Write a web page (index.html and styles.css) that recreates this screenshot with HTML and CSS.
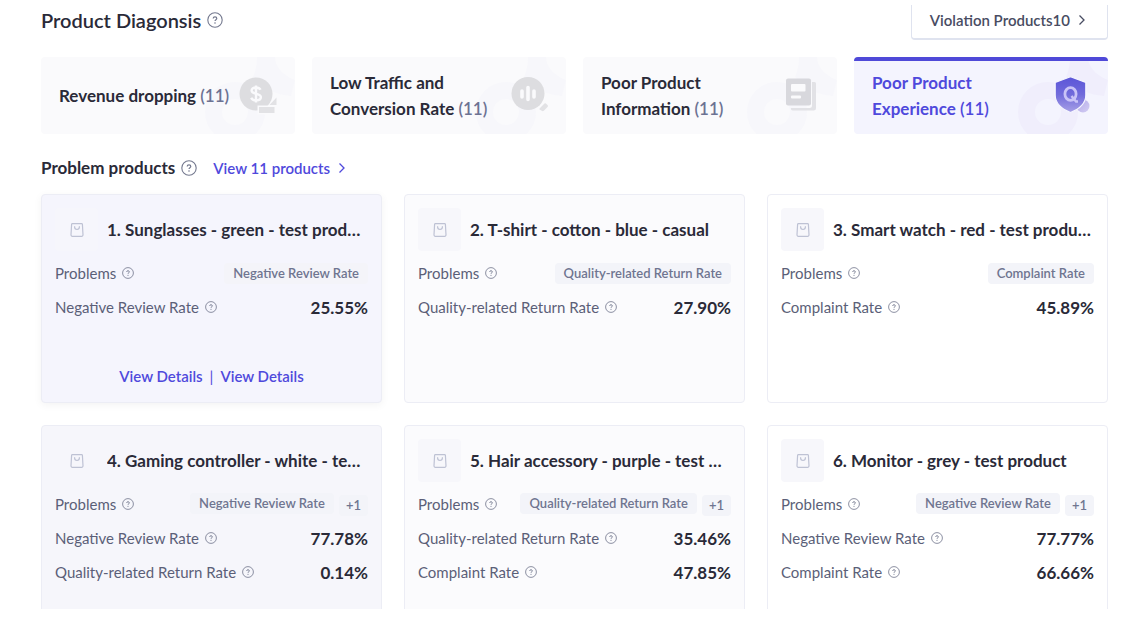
FILE: index.html
```html
<!DOCTYPE html>
<html lang="en">
<head>
<meta charset="utf-8">
<title>Product Diagonsis</title>
<link rel="stylesheet" href="styles.css">
</head>
<body>
<svg class="sprite" aria-hidden="true">
  <symbol id="help" viewBox="0 0 16 16">
    <circle cx="8" cy="8" r="7.2" fill="none" stroke="currentColor" stroke-width="1.1"/>
    <path d="M6.2 6.6c0-1 .8-1.7 1.8-1.7s1.8.7 1.8 1.6c0 1.2-1.8 1.3-1.8 2.6" fill="none" stroke="currentColor" stroke-width="1.2"/>
    <circle cx="8" cy="11" r=".8" fill="currentColor"/>
  </symbol>
  <symbol id="chevron" viewBox="0 0 8 12">
    <path d="M1.500 1.500 6 6l-4.500 4.500" fill="none" stroke="currentColor" stroke-width="1.300"/>
  </symbol>
  <symbol id="bag" viewBox="0 0 14 14">
    <path d="M2.400.7h9.200q.7 0 .8.700l.6 10.400a1.400 1.400 0 0 1-1.400 1.500H2.400A1.400 1.400 0 0 1 1 11.800L1.600 1.400q.1-.7.800-.7z" fill="none" stroke="currentColor" stroke-width="1.200"/>
    <path d="M4.600 3.200v.9a2.400 2.400 0 0 0 4.800 0v-.9" fill="none" stroke="currentColor" stroke-width="1.200"/>
  </symbol>
  <symbol id="rings" viewBox="0 0 92 77">
    <circle cx="32" cy="55" r="21.500" fill="none" stroke="currentColor" stroke-width="17"/>
    <path d="M54 0h18c0 9 7 18 20 23l-4 16C72 38 60 31 50 20c3-7 4-13 4-20z" fill="currentColor"/>
  </symbol>
</svg>
<main class="page">
  <header class="top">
    <h1 class="heading">Product Diagonsis <svg class="help help-lg"><use href="#help"/></svg></h1>
    <button class="violation" type="button">Violation Products10 <svg class="chevron"><use href="#chevron"/></svg></button>
  </header>

  <nav class="tabs">
    <button class="tab" type="button">
      <svg class="rings"><use href="#rings"/></svg>
      <span class="tab-label">Revenue dropping <span class="count">(11)</span></span>
      <svg class="tab-icon" viewBox="0 0 38 38">
        <circle cx="17" cy="17" r="16.500" fill="#dddde0"/>
        <path d="M21.500 12.800c-.8-1.600-2.500-2.300-4.500-2.300-2.600 0-4.400 1.200-4.400 3.100 0 4.400 9.300 2.200 9.300 6.500 0 2-2 3.300-4.700 3.300-2.300 0-4.200-.9-5-2.700M17 8.500v17" fill="none" stroke="#fafafc" stroke-width="2.400"/>
        <path d="M18.500 28.500h19v9h-19z" fill="#fafafc"/>
        <path d="M30.500 28 37.500 20.500V28zM20 30h15.500v6H20z" fill="#e2e2e5"/>
      </svg>
    </button>
    <button class="tab" type="button">
      <svg class="rings"><use href="#rings"/></svg>
      <span class="tab-label">Low Traffic and Conversion Rate <span class="count">(11)</span></span>
      <svg class="tab-icon" viewBox="0 0 38 38">
        <circle cx="18" cy="16.500" r="16.500" fill="#dddde0"/>
        <path d="M12 14v6M18 10.500v12M24 14v6" stroke="#fafafc" stroke-width="3.600" stroke-linecap="round"/>
        <path d="m29.500 31.500 5-5a1 1 0 0 1 1.400 0l1.600 1.600a1.500 1.500 0 0 1 0 2l-3.700 3.700a1.500 1.500 0 0 1-2 0l-2.300-1.300z" fill="#e2e2e5"/>
      </svg>
    </button>
    <button class="tab" type="button">
      <svg class="rings"><use href="#rings"/></svg>
      <span class="tab-label">Poor Product Information <span class="count">(11)</span></span>
      <svg class="tab-icon" viewBox="0 0 38 38">
        <path d="M31 5h2.500a1.500 1.500 0 0 1 1.500 1.500V31a2.500 2.500 0 0 1-2.500 2.500H12A1.800 1.800 0 0 1 10 31h18.500A2.500 2.500 0 0 0 31 28.500z" fill="#e2e2e6"/>
        <rect x="5" y="1.500" width="25" height="27" rx="2" fill="#d8d8dd"/>
        <rect x="10" y="7" width="14.500" height="7.500" rx="1" fill="#fafafc"/>
        <rect x="10" y="18.500" width="10" height="3" rx="1" fill="#fafafc"/>
      </svg>
    </button>
    <button class="tab tab-active" type="button" aria-current="true">
      <svg class="rings"><use href="#rings"/></svg>
      <span class="tab-label">Poor Product Experience <span class="count">(11)</span></span>
      <svg class="tab-icon" viewBox="0 0 38 38">
        <defs>
          <linearGradient id="shield" x1="0" y1="0" x2="0" y2="1"><stop offset="0" stop-color="#5b55d8"/><stop offset=".5" stop-color="#716bdb"/><stop offset="1" stop-color="#a7a0e6"/></linearGradient>
          <linearGradient id="dot" x1="0" y1="0" x2="1" y2="1"><stop offset="0" stop-color="#b3a9e8"/><stop offset="1" stop-color="#d3cdf3"/></linearGradient>
        </defs>
        <circle cx="31" cy="29" r="6.500" fill="url(#dot)"/>
        <path d="M18.500-.3 33.800 5.500V18c0 8-5.300 13.500-15.300 17.500C8.500 31.500 3.200 26 3.200 18V5.500z" fill="url(#shield)" stroke="#f4f4fe" stroke-width="1.200"/>
        <ellipse cx="18.500" cy="17" rx="5.600" ry="6.300" fill="none" stroke="#c9c3f7" stroke-width="2.800"/>
        <path d="m19.500 19 4.500 5.500h2" fill="none" stroke="#c9c3f7" stroke-width="2.400"/>
      </svg>
    </button>
  </nav>

  <div class="subhead">
    <h2 class="subtitle">Problem products <svg class="help help-lg"><use href="#help"/></svg></h2>
    <a class="link" href="#">View 11 products <svg class="chevron"><use href="#chevron"/></svg></a>
  </div>

  <section class="cards">
    <article class="card card-hover">
      <div class="card-head"><span class="thumb"><svg class="bag"><use href="#bag"/></svg></span><h3 class="name">1. Sunglasses - green - test product</h3></div>
      <dl class="stats">
        <div class="row"><dt class="term">Problems <svg class="help"><use href="#help"/></svg></dt><dd class="tags"><span class="tag">Negative Review Rate</span></dd></div>
        <div class="row"><dt class="term">Negative Review Rate <svg class="help"><use href="#help"/></svg></dt><dd class="value">25.55%</dd></div>
      </dl>
      <div class="actions"><a class="link" href="#">View Details</a><span class="bar">|</span><a class="link" href="#">View Details</a></div>
    </article>
    <article class="card card-pale">
      <div class="card-head"><span class="thumb"><svg class="bag"><use href="#bag"/></svg></span><h3 class="name">2. T-shirt - cotton - blue - casual</h3></div>
      <dl class="stats">
        <div class="row"><dt class="term">Problems <svg class="help"><use href="#help"/></svg></dt><dd class="tags"><span class="tag">Quality-related Return Rate</span></dd></div>
        <div class="row"><dt class="term">Quality-related Return Rate <svg class="help"><use href="#help"/></svg></dt><dd class="value">27.90%</dd></div>
      </dl>
    </article>
    <article class="card">
      <div class="card-head"><span class="thumb"><svg class="bag"><use href="#bag"/></svg></span><h3 class="name">3. Smart watch - red - test product item</h3></div>
      <dl class="stats">
        <div class="row"><dt class="term">Problems <svg class="help"><use href="#help"/></svg></dt><dd class="tags"><span class="tag">Complaint Rate</span></dd></div>
        <div class="row"><dt class="term">Complaint Rate <svg class="help"><use href="#help"/></svg></dt><dd class="value">45.89%</dd></div>
      </dl>
    </article>
    <article class="card card-tint">
      <div class="card-head"><span class="thumb"><svg class="bag"><use href="#bag"/></svg></span><h3 class="name">4. Gaming controller - white - test product</h3></div>
      <dl class="stats">
        <div class="row"><dt class="term">Problems <svg class="help"><use href="#help"/></svg></dt><dd class="tags"><span class="tag">Negative Review Rate</span><span class="tag tag-more">+1</span></dd></div>
        <div class="row"><dt class="term">Negative Review Rate <svg class="help"><use href="#help"/></svg></dt><dd class="value">77.78%</dd></div>
        <div class="row"><dt class="term">Quality-related Return Rate <svg class="help"><use href="#help"/></svg></dt><dd class="value">0.14%</dd></div>
      </dl>
    </article>
    <article class="card card-pale">
      <div class="card-head"><span class="thumb"><svg class="bag"><use href="#bag"/></svg></span><h3 class="name">5. Hair accessory - purple - test product</h3></div>
      <dl class="stats">
        <div class="row"><dt class="term">Problems <svg class="help"><use href="#help"/></svg></dt><dd class="tags"><span class="tag">Quality-related Return Rate</span><span class="tag tag-more">+1</span></dd></div>
        <div class="row"><dt class="term">Quality-related Return Rate <svg class="help"><use href="#help"/></svg></dt><dd class="value">35.46%</dd></div>
        <div class="row"><dt class="term">Complaint Rate <svg class="help"><use href="#help"/></svg></dt><dd class="value">47.85%</dd></div>
      </dl>
    </article>
    <article class="card">
      <div class="card-head"><span class="thumb"><svg class="bag"><use href="#bag"/></svg></span><h3 class="name">6. Monitor - grey - test product</h3></div>
      <dl class="stats">
        <div class="row"><dt class="term">Problems <svg class="help"><use href="#help"/></svg></dt><dd class="tags"><span class="tag">Negative Review Rate</span><span class="tag tag-more">+1</span></dd></div>
        <div class="row"><dt class="term">Negative Review Rate <svg class="help"><use href="#help"/></svg></dt><dd class="value">77.77%</dd></div>
        <div class="row"><dt class="term">Complaint Rate <svg class="help"><use href="#help"/></svg></dt><dd class="value">66.66%</dd></div>
      </dl>
    </article>
  </section>
</main>
</body>
</html>
```
FILE: styles.css
```css
* { box-sizing: border-box; }
body {
  margin: 0;
  height: 100vh;
  padding: 5px 0 15px;
  overflow: hidden;
  background: #fff;
  color: #2a2a38;
  font-family: Lato, "Open Sans", sans-serif;
}
h1, h2, h3 { margin: 0; font-weight: 700; }
dl, dd { margin: 0; }
button { font: inherit; color: inherit; cursor: pointer; }
.sprite { position: absolute; width: 0; height: 0; }
.page { height: 100%; overflow: hidden; padding: 0 26px 0 41px; }

.top { display: flex; justify-content: space-between; align-items: flex-start; }
.heading, .subtitle { display: flex; align-items: center; gap: 6px; }
.heading { font-size: 20px; font-weight: 600; line-height: 30px; }
.subtitle { font-size: 17px; line-height: 26px; }
.help { flex: none; width: 12px; height: 12px; color: #74798f; }
.help-lg { width: 16px; height: 16px; }
.chevron { flex: none; width: 8px; height: 12px; }
.violation {
  display: flex;
  align-items: center;
  gap: 8px;
  height: 35px;
  padding: 0 21px 4px 18px;
  border: 1px solid #dfe3ef;
  border-width: 0 1px 2px;
  border-radius: 0 0 4px 4px;
  background: #fff;
  color: #484c62;
  font-size: 15px;
  font-weight: 600;
}

.tabs { display: grid; grid-template-columns: repeat(4, 1fr); gap: 17px; margin-top: 17px; }
.tab {
  position: relative;
  display: flex;
  align-items: center;
  justify-content: space-between;
  min-height: 77px;
  padding: 0 18px;
  border: 0;
  border-radius: 4px;
  overflow: hidden;
  background: #fafafc;
  text-align: left;
  font-size: 17px;
  font-weight: 700;
  line-height: 26px;
}
.tab-label { position: relative; flex: 0 1 180px; }
.tab-icon { position: relative; flex: none; width: 38px; height: 38px; }
.rings { position: absolute; right: 0; top: 0; width: 92px; height: 77px; color: #f7f7fb; }
.count { color: #6c7293; font-weight: 600; }
.tab-active { background: #f4f4fe; color: #4f49dc; }
.tab-active::before { content: ""; position: absolute; inset: 0 0 auto; height: 4px; background: #4f49d8; z-index: 1; }
.tab-active .rings { color: #f0eefc; }
.tab-active .count { color: inherit; }

.subhead { display: flex; align-items: center; gap: 16px; margin: 21px 0 13px; }
.link {
  display: inline-flex;
  align-items: center;
  gap: 8px;
  color: #4f49dc;
  font-size: 15px;
  font-weight: 600;
  text-decoration: none;
}

.cards { display: grid; grid-template-columns: repeat(3, 1fr); gap: 22px; }
.card {
  display: flex;
  flex-direction: column;
  min-width: 0;
  min-height: 209px;
  padding: 13px;
  border: 1px solid #ecedf5;
  border-radius: 4px;
  background: #fff;
}
.card-pale { background: #fbfbfd; }
.card-tint { background: #f6f6fb; }
.card-hover { background: #f5f5fd; box-shadow: 0 2px 8px #0000000d; }
.card-head { display: flex; align-items: center; gap: 9px; padding-right: 2px; }
.thumb { display: grid; place-items: center; flex: none; width: 43px; height: 43px; border-radius: 4px; background: #f7f7fb; color: #bec2d4; }
.card-tint .thumb { background: transparent; }
.card-hover .thumb { background: #f6f6fc; }
.bag { width: 14px; height: 14px; }
.name { overflow: hidden; white-space: nowrap; text-overflow: ellipsis; font-size: 17px; line-height: 26px; }
.stats { margin-top: 5px; }
.row { display: flex; align-items: center; justify-content: space-between; height: 34px; }
.term { display: flex; align-items: center; gap: 6px; color: #5b5f78; font-size: 15px; }
.tags { display: flex; align-items: flex-start; gap: 5px; }
.tag { padding: 0 9px; border-radius: 4px; background: #f3f4f9; color: #6f7590; font-size: 13px; font-weight: 600; line-height: 21px; }
.tag-more { margin-top: 2px; padding: 0 7px; }
.card-hover .tag { background: #f4f4f9; }
.value { font-size: 17px; font-weight: 700; }
.actions { display: flex; justify-content: center; align-items: center; gap: 7px; margin-top: auto; line-height: 26px; }
.bar { color: #4f49dc; font-size: 15px; }
```
